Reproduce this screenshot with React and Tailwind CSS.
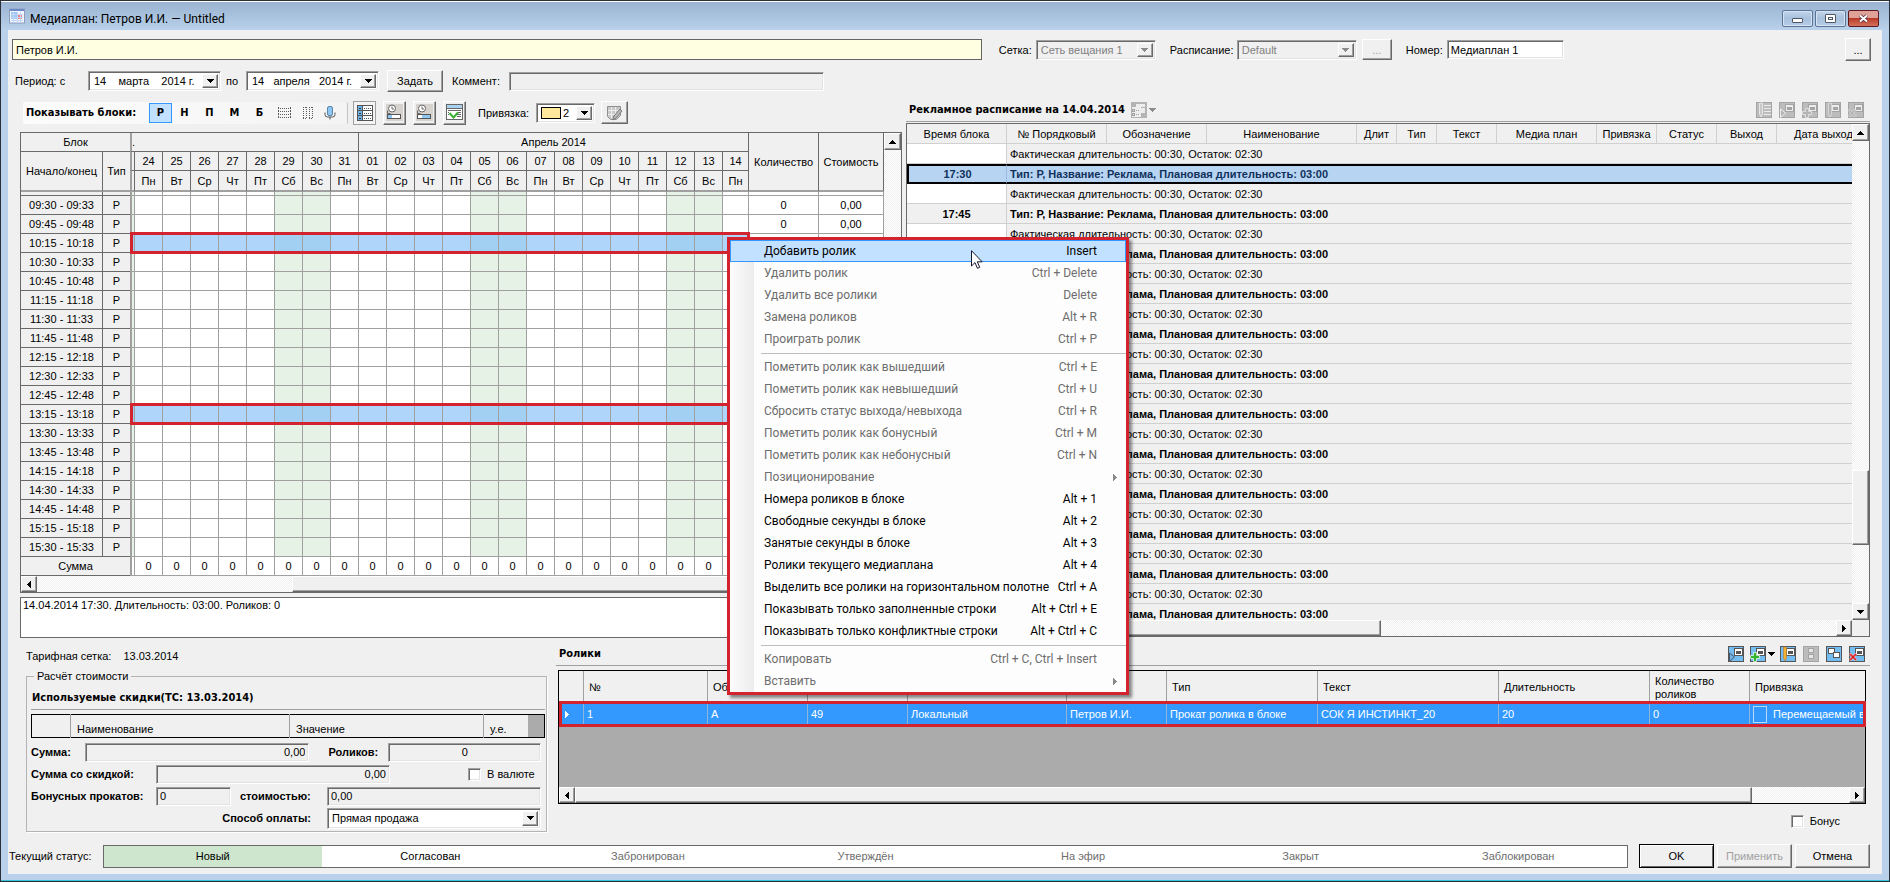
import clsx from 'clsx';

const DAYS = [
  ['24', 'Пн'], ['25', 'Вт'], ['26', 'Ср'], ['27', 'Чт'], ['28', 'Пт'], ['29', 'Сб'], ['30', 'Вс'], ['31', 'Пн'],
  ['01', 'Вт'], ['02', 'Ср'], ['03', 'Чт'], ['04', 'Пт'], ['05', 'Сб'], ['06', 'Вс'], ['07', 'Пн'], ['08', 'Вт'],
  ['09', 'Ср'], ['10', 'Чт'], ['11', 'Пт'], ['12', 'Сб'], ['13', 'Вс'], ['14', 'Пн'],
];

const BLOCKS = [
  '09:30 - 09:33', '09:45 - 09:48', '10:15 - 10:18', '10:30 - 10:33', '10:45 - 10:48', '11:15 - 11:18', '11:30 - 11:33',
  '11:45 - 11:48', '12:15 - 12:18', '12:30 - 12:33', '12:45 - 12:48', '13:15 - 13:18', '13:30 - 13:33', '13:45 - 13:48',
  '14:15 - 14:18', '14:30 - 14:33', '14:45 - 14:48', '15:15 - 15:18', '15:30 - 15:33',
];
const SELECTED_BLOCKS = ['10:15 - 10:18', '13:15 - 13:18'];

const SCHEDULE_TIMES = ['17:30', '17:45', '18:15', '18:30', '18:45', '19:15', '19:30', '19:45', '20:15', '20:30', '20:45', '21:15'];

const SCHEDULE_COLUMNS = [
  'Время блока', '№ Порядковый', 'Обозначение', 'Наименование', 'Длит', 'Тип', 'Текст', 'Медиа план', 'Привязка', 'Статус', 'Выход', 'Дата выхода',
];

const MENU = [
  { label: 'Добавить ролик', keys: 'Insert', active: true },
  { label: 'Удалить ролик', keys: 'Ctrl + Delete', disabled: true },
  { label: 'Удалить все ролики', keys: 'Delete', disabled: true },
  { label: 'Замена роликов', keys: 'Alt + R', disabled: true },
  { label: 'Проиграть ролик', keys: 'Ctrl + P', disabled: true },
  null,
  { label: 'Пометить ролик как вышедший', keys: 'Ctrl + E', disabled: true },
  { label: 'Пометить ролик как невышедший', keys: 'Ctrl + U', disabled: true },
  { label: 'Сбросить статус выхода/невыхода', keys: 'Ctrl + R', disabled: true },
  { label: 'Пометить ролик как бонусный', keys: 'Ctrl + M', disabled: true },
  { label: 'Пометить ролик как небонусный', keys: 'Ctrl + N', disabled: true },
  { label: 'Позиционирование', submenu: true, disabled: true },
  { label: 'Номера роликов в блоке', keys: 'Alt + 1' },
  { label: 'Свободные секунды в блоке', keys: 'Alt + 2' },
  { label: 'Занятые секунды в блоке', keys: 'Alt + 3' },
  { label: 'Ролики текущего медиаплана', keys: 'Alt + 4' },
  { label: 'Выделить все ролики на горизонтальном полотне', keys: 'Ctrl + A' },
  { label: 'Показывать только заполненные строки', keys: 'Alt + Ctrl + E' },
  { label: 'Показывать только конфликтные строки', keys: 'Alt + Ctrl + C' },
  null,
  { label: 'Копировать', keys: 'Ctrl + C, Ctrl + Insert', disabled: true },
  { label: 'Вставить', submenu: true, disabled: true },
];

const STATUSES = ['Новый', 'Согласован', 'Забронирован', 'Утверждён', 'На эфир', 'Закрыт', 'Заблокирован'];

const RAISED =
  'bg-[#f0f0f0] border border-t-white border-l-white border-r-[#696969] border-b-[#696969] shadow-[inset_-1px_-1px_0_#a0a0a0]';
const SUNKEN =
  'border border-t-[#a0a0a0] border-l-[#a0a0a0] border-r-white border-b-white shadow-[inset_1px_1px_0_#696969,inset_-1px_-1px_0_#e3e3e3]';
const TRACK = 'bg-[repeating-conic-gradient(#ffffff_0_25%,#f0f0f0_0_50%)] bg-[length:2px_2px]';

const isWeekend = (day) => day === 'Сб' || day === 'Вс';

/* ---------- Иконки ---------- */

function Arrow({ dir = 'down', className }) {
  const points = {
    down: '0,0 7,0 3.5,4',
    up: '0,4 7,4 3.5,0',
    left: '4,0 4,7 0,3.5',
    right: '0,0 0,7 4,3.5',
  };
  const vertical = dir === 'down' || dir === 'up';
  return (
    <svg width={vertical ? 7 : 4} height={vertical ? 4 : 7} className={className} shapeRendering="crispEdges" aria-hidden="true">
      <polygon points={points[dir]} fill="currentColor" />
    </svg>
  );
}

function AppIcon() {
  return (
    <svg width="16" height="16" viewBox="0 0 16 16" aria-hidden="true">
      <rect x="0.5" y="1" width="15" height="14" fill="#f1f5fd" stroke="#8d9bc0" />
      <rect x="1" y="1" width="14" height="2" fill="#6d8ac6" />
      <rect x="2" y="4" width="6" height="7" fill="#9cc6f8" />
      <rect x="9" y="7" width="4" height="4" fill="#f28080" />
      <path d="M2 6.500h12M2 9.500h12M2 12.500h12M4.500 4v10M8.500 4v10M11.500 4v10" stroke="#c3d6f4" fill="none" />
    </svg>
  );
}

function RowsIcon() {
  return (
    <svg width="13" height="12" viewBox="0 0 13 12" shapeRendering="crispEdges" aria-hidden="true">
      <path d="M0 1.500h13M0 4.500h13M0 7.500h13M0 10.500h13" stroke="#5a5a5a" strokeDasharray="1 1" fill="none" />
      <path d="M0.500 0v12M12.500 0v12" stroke="#5a5a5a" strokeDasharray="1 2" fill="none" />
    </svg>
  );
}

function ColumnsIcon() {
  return (
    <svg width="11" height="12" viewBox="0 0 11 12" shapeRendering="crispEdges" aria-hidden="true">
      <path d="M1.500 0v12M4.500 0v12M7.500 0v12M10.500 0v12M1 0.500h4M7 0.500h4M1 11.500h4M7 11.500h4" stroke="#5a5a5a" strokeDasharray="1 1" fill="none" />
    </svg>
  );
}

function MicIcon() {
  return (
    <svg width="12" height="14" viewBox="0 0 12 14" aria-hidden="true">
      <rect x="3.500" y="0.500" width="5" height="9" rx="1.500" fill="#8fc6f2" stroke="#5b87a8" />
      <path d="M1 6.500v2q0 2.500 2.500 2.500h5q2.500 0 2.500-2.500v-2M6 11v2.500" stroke="#555" fill="none" />
    </svg>
  );
}

function ListIcon() {
  return (
    <svg width="16" height="16" viewBox="0 0 16 16" shapeRendering="crispEdges" aria-hidden="true">
      <rect x="0.500" y="0.500" width="15" height="15" fill="#fff" stroke="#555" />
      <rect x="1" y="1" width="4" height="14" fill="#6db3e8" />
      <path d="M5.500 0v16M0 5.500h16M0 10.500h16" stroke="#555" />
      <path d="M7 3h7M7 8h7M7 13h7" stroke="#555" strokeDasharray="1 1" />
      <path d="M2 3h2M2 8h2M2 13h2" stroke="#333" />
    </svg>
  );
}

function ClockIcon({ filled }) {
  return (
    <svg width="17" height="17" viewBox="0 0 17 17" aria-hidden="true">
      <rect width="17" height="17" fill="#d6d3ce" />
      <circle cx="6" cy="4.500" r="3.500" fill="#fff" stroke="#666" />
      <path d="M6 2.500v2.500h2M1.500 6.500v3h3" stroke="#666" fill="none" />
      <rect x="1.500" y="10.500" width="13" height="4" fill={filled ? '#8fc6f2' : '#fff'} stroke="#555" shapeRendering="crispEdges" />
      <rect x="2" y="11" width="4" height="3" fill={filled ? '#fff' : '#8fc6f2'} />
    </svg>
  );
}

function CheckListIcon() {
  return (
    <svg width="17" height="17" viewBox="0 0 17 17" aria-hidden="true">
      <rect x="0.500" y="0.500" width="16" height="15" fill="#fff" stroke="#666" shapeRendering="crispEdges" />
      <rect x="1" y="1" width="15" height="3" fill="#a9d2f0" />
      <path d="M1 4.500h15M2 6.500h13M2 8.500h1M12 8.500h3M2 10.500h1M11 10.500h4M11 12.500h4" stroke="#666" shapeRendering="crispEdges" />
      <path d="M3.500 9l4 4.500 4.500-5" stroke="#39b032" strokeWidth="2" fill="none" />
    </svg>
  );
}

function EditGridIcon() {
  return (
    <svg width="17" height="16" viewBox="0 0 17 16" aria-hidden="true">
      <path d="M1.500 1.500h13v9l-4 4h-6l-3-3z" fill="#c9c9c9" stroke="#8f8f8f" />
      <path d="M2 5.500h12M2 9.500h11M5.500 2v11M9.500 2v10" stroke="#ececec" />
      <path d="M7 15l1-4 6-7 2 2-6 7z" fill="#b8b8b8" stroke="#7a7a7a" />
    </svg>
  );
}

function ScheduleIcon() {
  return (
    <svg width="16" height="16" viewBox="0 0 16 16" shapeRendering="crispEdges" aria-hidden="true">
      <rect width="16" height="16" fill="#b4b4b4" />
      <rect x="5" y="2" width="9" height="9" fill="#ededed" />
      <rect x="1" y="5" width="9" height="10" fill="#ededed" />
      <rect x="10" y="5" width="4" height="1" fill="#b4b4b4" />
      <path d="M1.500 7.500h2v2h-2zM1.500 11.500h2v2h-2z" stroke="#a0a0a0" fill="none" />
      <path d="M5 8.500h4M5 12.500h4" stroke="#a0a0a0" strokeDasharray="1 1" />
    </svg>
  );
}

const CARD_OVERLAYS = {
  play: { color: '#6db3e8', path: <path d="M1.500 7v8.500L6.500 11z" stroke="#4a5a66" /> },
  add: { color: '#35b52c', path: <path d="M3.500 6.500h3v3h3v3h-3v3h-3v-3h-3v-3h3z" stroke="#ffffff" strokeWidth="0.700" /> },
  edit: { color: '#f2b233', path: <path d="M3.500 1h3v11L5 15l-1.500-3z" stroke="#b8792a" strokeWidth="0.600" /> },
  remove: { color: '#e02020', path: <path d="M0 8.500L1.500 7 4 9.500 6.500 7 8 8.500 5.500 11 8 13.500 6.500 15 4 12.500 1.500 15 0 13.500 2.500 11z" stroke="#fff" strokeWidth="0.500" /> },
};

function CardIcon({ kind, muted }) {
  const base = muted ? '#bcbcbc' : '#74bdf2';
  const line = muted ? '#a4a4a4' : '#555555';
  const overlay = CARD_OVERLAYS[kind];
  return (
    <svg width="16" height="16" viewBox="0 0 16 16" aria-hidden="true">
      <g shapeRendering="crispEdges">
        <rect x="0.500" y="0.500" width="15" height="15" fill={base} stroke={line} />
        {kind === 'copy' && (
          <>
            <rect x="2.500" y="2.500" width="6" height="5" fill="#fff" stroke={line} />
            <rect x="7.500" y="6.500" width="6" height="5" fill="#fff" stroke={line} />
          </>
        )}
        {kind === 'stack' && (
          <>
            <rect x="5.500" y="2.500" width="5" height="4" fill="#e6e6e6" stroke={line} />
            <rect x="5.500" y="8.500" width="5" height="4" fill="#e6e6e6" stroke={line} />
          </>
        )}
        {kind === 'list' && <path d="M8 3.500h7M8 6.500h7M8 9.500h7M8 12.500h7" stroke="#ececec" />}
        {overlay && (
          <>
            <rect x="6.500" y="2.500" width="8" height="7" fill={muted ? '#ececec' : '#ffffff'} stroke={line} />
            <rect x="8" y="5" width="5" height="3" fill={line} />
          </>
        )}
      </g>
      {kind === 'list' && <path d="M3.500 1h3v11L5 15l-1.500-3z" fill="#c8c8c8" stroke="#f4f4f4" strokeWidth="0.700" />}
      {overlay && <g fill={muted ? '#b4b4b4' : overlay.color} className={muted ? '[&_path]:stroke-[#eeeeee]' : ''}>{overlay.path}</g>}
    </svg>
  );
}

function Cursor() {
  return (
    <svg width="12" height="20" viewBox="0 0 12 20" className="absolute left-[241px] top-[10px]" aria-hidden="true">
      <path d="M0.500 0.700v15.300l3.500-3.400 2.400 5.700 2.300-1-2.400-5.500h4.900z" fill="#fff" stroke="#16162e" />
    </svg>
  );
}

/* ---------- Элементы управления ---------- */

function Button({ className, children, ...rest }) {
  return (
    <button type="button" className={clsx('flex shrink-0 items-center justify-center disabled:text-[#a0a0a0]', RAISED, className)} {...rest}>
      {children}
    </button>
  );
}

function Select({ id, value, disabled, className, swatch }) {
  return (
    <div className={clsx('flex shrink-0 items-center p-[2px]', SUNKEN, disabled ? 'bg-[#f0f0f0] text-[#808080]' : 'bg-white', className)}>
      {swatch && <span className="ml-[2px] h-[12px] w-[20px] border border-black bg-[#ffe79c]" />}
      <select id={id} disabled={disabled} className="min-w-0 flex-1 appearance-none bg-transparent pl-[2px] outline-none">
        <option>{value}</option>
      </select>
      <span className={clsx('flex w-[16px] shrink-0 items-center justify-center self-stretch', RAISED)}>
        <Arrow className={disabled ? 'text-[#8a8a8a]' : 'text-black'} />
      </span>
    </div>
  );
}

function DateField({ label, value }) {
  return (
    <div className={clsx('flex h-[20px] w-[133px] shrink-0 bg-white p-[2px]', SUNKEN)}>
      <input aria-label={label} defaultValue={value} className="min-w-0 flex-1 bg-transparent pl-[3px] outline-none" />
      <Button className="w-[16px]" aria-label="Открыть календарь">
        <Arrow />
      </Button>
    </div>
  );
}

function Field({ className, ...rest }) {
  return <input className={clsx('h-[19px] min-w-0 bg-[#f0f0f0] px-[3px] outline-none', SUNKEN, className)} {...rest} />;
}

function Checkbox({ id, className }) {
  return <input id={id} type="checkbox" className={clsx('size-[13px] shrink-0 appearance-none bg-white', SUNKEN, className)} />;
}

function HScroll({ before, thumb, after, className }) {
  return (
    <div className={clsx('flex h-[16px]', className)}>
      <Button className="w-[16px]" aria-label="Влево"><Arrow dir="left" /></Button>
      <div className={TRACK} style={{ flex: before }} />
      <div className={RAISED} style={{ flex: thumb }} />
      <div className={TRACK} style={{ flex: after }} />
      <Button className="w-[16px]" aria-label="Вправо"><Arrow dir="right" /></Button>
    </div>
  );
}

function VScroll({ before, thumb, after }) {
  return (
    <div className="flex w-[17px] shrink-0 flex-col">
      <Button className="h-[17px]" aria-label="Вверх"><Arrow dir="up" /></Button>
      <div className={TRACK} style={{ flex: before }} />
      <div className={RAISED} style={{ flex: thumb }} />
      <div className={TRACK} style={{ flex: after }} />
      <Button className="h-[17px]" aria-label="Вниз"><Arrow /></Button>
    </div>
  );
}

/* ---------- Окно ---------- */

function TitleBar() {
  const glass = 'flex h-[17px] w-[31px] items-center justify-center rounded-[2px] border';
  const blue = 'border-[#5c7596] bg-linear-to-b from-[#c3d6ea] via-[#a8c0dc] to-[#b6cde6] shadow-[inset_0_0_0_1px_#d5e3f3]';
  return (
    <header className="flex h-[28px] items-center bg-linear-to-b from-[#99b3d1] to-[#b9d1ea] px-[8px] font-[Roboto,'Noto_Sans',sans-serif] text-[12px]">
      <AppIcon />
      <h1 className="ml-[5px] flex-1 pt-[5px]">Медиаплан: Петров И.И. — Untitled</h1>
      <div className="flex gap-[2px] pr-[2px] pt-[5px]">
        <button type="button" aria-label="Свернуть" className={clsx(glass, blue)}>
          <span className="mt-[3px] h-[5px] w-[11px] rounded-[1px] border border-[#4c5665] bg-white" />
        </button>
        <button type="button" aria-label="Развернуть" className={clsx(glass, blue)}>
          <span className="flex h-[9px] w-[11px] items-center justify-center rounded-[1px] border border-[#4c5665] bg-white">
            <span className="h-[3px] w-[5px] border border-[#4c5665]" />
          </span>
        </button>
        <button type="button" aria-label="Закрыть" className={clsx(glass, 'border-[#5a1a20] bg-linear-to-b from-[#e0a197] from-45% via-[#b83a26] via-50% to-[#d4715c]')}>
          <svg width="11" height="9" viewBox="0 0 11 9" aria-hidden="true">
            <path d="M2 1.500l7 6M9 1.500l-7 6" stroke="#4a3040" strokeWidth="3.500" />
            <path d="M2 1.500l7 6M9 1.500l-7 6" stroke="#fff" strokeWidth="2" />
          </svg>
        </button>
      </div>
    </header>
  );
}

function PlanHeader() {
  return (
    <>
      <div className="flex h-[39px] items-center pr-[11px] pl-[4px]">
        <input aria-label="Рекламодатель" defaultValue="Петров И.И." className="h-[21px] min-w-0 flex-[968] border border-[#646464] bg-[#ffffe1] px-[3px] outline-none" />
        <label htmlFor="net" className="ml-[17px] w-[37px] shrink-0">Сетка:</label>
        <Select id="net" value="Сеть вещания 1" disabled className="h-[20px] w-[120px]" />
        <label htmlFor="timetable" className="ml-[14px] w-[67px] shrink-0">Расписание:</label>
        <Select id="timetable" value="Default" disabled className="h-[20px] w-[120px]" />
        <Button disabled className="ml-[5px] h-[21px] w-[30px]">...</Button>
        <label htmlFor="number" className="ml-[14px] w-[41px] shrink-0">Номер:</label>
        <Field id="number" defaultValue="Медиаплан 1" className="w-[117px] bg-white" />
        <div className="flex-[283]" />
        <Button className="h-[23px] w-[26px]">...</Button>
      </div>
      <div className="flex h-[24px] items-center pl-[7px]">
        <span className="w-[73px] shrink-0">Период: с</span>
        <DateField label="Начало периода" value="14    марта    2014 г." />
        <span className="w-[25px] pl-[5px]">по</span>
        <DateField label="Конец периода" value="14   апреля   2014 г." />
        <Button className="ml-[8px] h-[22px] w-[56px]">Задать</Button>
        <label htmlFor="comment" className="ml-[9px] w-[57px] shrink-0">Коммент:</label>
        <Field id="comment" className="w-[315px]" />
      </div>
    </>
  );
}

function BlockToolbar() {
  return (
    <div className="flex h-[39px] items-center">
      <div className="ml-[3px] flex h-[22px] w-[325px] items-center rounded-[2px] border-r border-[#c4c4c4] bg-linear-to-r from-[#fcfcfc] to-[#f4f4f4] pl-[3px] font-['DejaVu_Sans_Condensed','Noto_Sans',sans-serif] font-bold">
        <span className="w-[123px]">Показывать блоки:</span>
        <button type="button" className="h-[20px] w-[23px] border border-[#3399ff] bg-[#c2e0ff]">Р</button>
        {['Н', 'П', 'М', 'Б'].map((type) => (
          <button key={type} type="button" className="w-[25px]">{type}</button>
        ))}
        <div className="ml-[6px] flex items-center gap-[11px]">
          <button type="button" aria-label="Строки"><RowsIcon /></button>
          <button type="button" aria-label="Столбцы"><ColumnsIcon /></button>
          <button type="button" aria-label="Микрофон"><MicIcon /></button>
        </div>
      </div>
      <div className="ml-[5px] flex gap-[7px]">
        <button type="button" aria-label="Список" className="flex h-[24px] w-[23px] items-center justify-center border border-[#a0a0a0] bg-[#f4f4f4]"><ListIcon /></button>
        <Button className="h-[24px] w-[23px]" aria-label="Время"><ClockIcon /></Button>
        <Button className="h-[24px] w-[23px]" aria-label="Занятое время"><ClockIcon filled /></Button>
        <Button className="h-[24px] w-[23px]" aria-label="Проверка"><CheckListIcon /></Button>
      </div>
      <label htmlFor="bind" className="ml-[12px] w-[58px]">Привязка:</label>
      <Select id="bind" value="2" swatch className="h-[20px] w-[59px]" />
      <Button className="ml-[6px] h-[23px] w-[27px]" aria-label="Изменить"><EditGridIcon /></Button>
    </div>
  );
}

function BlockGrid() {
  const head = 'border-r border-b border-[#696969] bg-[#f0f0f0] font-normal p-0 text-center';
  const cell = 'border-r border-b border-[#a0a0a0] p-0 text-center';
  const frozen = 'border-l-2 border-l-[#a0a0a0]';
  return (
    <div className="overflow-hidden border border-[#696969] bg-white">
      <div className="flex">
        <div className="min-w-0 flex-1 overflow-hidden">
          <table className="w-[863px] table-fixed border-separate border-spacing-0 leading-[16px]">
            <colgroup>
              <col className="w-[82px]" />
              <col className="w-[27px]" />
              <col className="w-[5px]" />
              {DAYS.map(([num], i) => <col key={num} className={i === 21 ? 'w-[26px]' : 'w-[28px]'} />)}
              <col className="w-[70px]" />
              <col className="w-[65px]" />
            </colgroup>
            <thead>
              <tr className="h-[19px]">
                <th colSpan={2} className={clsx(head, 'border-r-0')}>Блок</th>
                <th colSpan={9} className={clsx(head, frozen, 'text-left')}>.</th>
                <th colSpan={14} className={head}>Апрель 2014</th>
                <th rowSpan={3} className={clsx(head, 'border-b-2 border-b-[#a0a0a0]')}>Количество</th>
                <th rowSpan={3} className={clsx(head, 'border-b-2 border-b-[#a0a0a0]')}>Стоимость</th>
              </tr>
              <tr className="h-[19px]">
                <th rowSpan={2} className={clsx(head, 'border-b-2 border-b-[#a0a0a0]')}>Начало/конец</th>
                <th rowSpan={2} className={clsx(head, 'border-r-0 border-b-2 border-b-[#a0a0a0]')}>Тип</th>
                <th className={clsx(head, frozen)} />
                {DAYS.map(([num]) => <th key={num} className={head}>{num}</th>)}
              </tr>
              <tr className="h-[21px]">
                <th className={clsx(head, frozen, 'border-b-2 border-b-[#a0a0a0]')} />
                {DAYS.map(([num, day]) => <th key={num} className={clsx(head, 'border-b-2 border-b-[#a0a0a0]')}>{day}</th>)}
              </tr>
            </thead>
            <tbody>
              <tr className="h-[4px]">
                <td className={clsx(head)} />
                <td className={clsx(head, 'border-r-0')} />
                <td className={clsx(cell, frozen, 'bg-[#e6f2e6]')} />
                {DAYS.map(([num, day]) => <td key={num} className={clsx(cell, isWeekend(day) && 'bg-[#e6f2e6]')} />)}
                <td className={cell} />
                <td className={cell} />
              </tr>
              {BLOCKS.map((block) => {
                const selected = SELECTED_BLOCKS.includes(block);
                return (
                  <tr key={block} className="h-[19px]">
                    <td className={head}>{block}</td>
                    <td className={clsx(head, 'border-r-0')}>Р</td>
                    <td className={clsx(cell, frozen, 'relative', selected ? 'bg-[#a2d0f2]' : 'bg-[#e6f2e6]')}>
                      {selected && <span className="absolute -top-[2px] -left-[2px] z-10 h-[22px] w-[620px] border-3 border-[#d2232f]" />}
                    </td>
                    {DAYS.map(([num, day]) => (
                      <td
                        key={num}
                        className={clsx(
                          cell,
                          selected && (isWeekend(day) ? 'bg-[#a2d0f2]' : 'bg-[#b0d5fb]'),
                          !selected && isWeekend(day) && 'bg-[#e6f2e6]',
                        )}
                      />
                    ))}
                    <td className={cell}>0</td>
                    <td className={cell}>0,00</td>
                  </tr>
                );
              })}
              <tr className="h-[19px]">
                <td colSpan={2} className={clsx(head, 'border-r-0')}>Сумма</td>
                <td className={clsx(cell, frozen)} />
                {DAYS.map(([num]) => <td key={num} className={cell}>0</td>)}
                <td className={cell}>0</td>
                <td className={cell}>0,00</td>
              </tr>
            </tbody>
          </table>
        </div>
        <VScroll before={200} thumb={120} after={80} />
      </div>
      <HScroll before={256} thumb={592} after={0} />
    </div>
  );
}

function Schedule() {
  const line = 'border-r border-b border-[#d0d0d0]';
  return (
    <section className="flex min-w-0 flex-col">
      <div className="mb-[1px] flex h-[29px] items-center border-b border-[#a0a0a0] pt-[5px] pl-[3px]">
        <h2 className="font-['DejaVu_Sans_Condensed','Noto_Sans',sans-serif] font-bold">Рекламное расписание на 14.04.2014</h2>
        <button type="button" aria-label="Вид" className="ml-[6px] flex items-center gap-[2px] text-[#8a8a8a]">
          <ScheduleIcon />
          <Arrow />
        </button>
        <div className="mr-[6px] ml-auto flex gap-[7px]">
          {['list', 'play', 'add', 'edit', 'remove'].map((kind) => (
            <button key={kind} type="button" disabled aria-label={kind}><CardIcon kind={kind} muted /></button>
          ))}
        </div>
      </div>
      <div className="border border-[#696969]">
        <div className="flex h-[496px]">
          <div className="min-w-0 flex-1 overflow-hidden">
            <table className="w-[970px] table-fixed border-separate border-spacing-0">
              <colgroup>
                <col className="w-[100px]" />
                <col className="w-[100px]" />
                <col className="w-[100px]" />
                <col className="w-[150px]" />
                <col className="w-[40px]" />
                <col className="w-[40px]" />
                <col className="w-[60px]" />
                <col className="w-[100px]" />
                <col className="w-[60px]" />
                <col className="w-[60px]" />
                <col className="w-[60px]" />
                <col className="w-[100px]" />
              </colgroup>
              <thead>
                <tr className="h-[20px]">
                  {SCHEDULE_COLUMNS.map((name) => <th key={name} className={clsx(line, 'p-0 font-normal whitespace-nowrap')}>{name}</th>)}
                </tr>
              </thead>
              <tbody>
                {SCHEDULE_TIMES.flatMap((time, i) => {
                  const edge = i === 0 ? 'border-y-2 border-black bg-[#b7d4f2] text-[#10305c]' : line;
                  return [
                    <tr key={`${time}-fact`} className="h-[20px]">
                      <td className={clsx(line, 'bg-white p-0')} />
                      <td colSpan={11} className={clsx(line, 'p-0 pl-[3px]')}>Фактическая длительность: 00:30, Остаток: 02:30</td>
                    </tr>,
                    <tr key={time} className="h-[20px] font-bold">
                      <td className={clsx(edge, 'p-0 text-center', i === 0 && 'border-r border-l-2 border-r-[#9cbbe0]')}>{time}</td>
                      <td colSpan={11} className={clsx(edge, 'p-0 pl-[3px]')}>Тип: Р, Название: Реклама, Плановая длительность: 03:00</td>
                    </tr>,
                  ];
                })}
              </tbody>
            </table>
          </div>
          <VScroll before={330} thumb={74} after={58} />
        </div>
        <div className="flex">
          <HScroll before={0} thumb={456} after={456} className="min-w-0 flex-1" />
          <div className="w-[17px] bg-[#f0f0f0]" />
        </div>
      </div>
    </section>
  );
}

function CostPanel() {
  return (
    <section className="min-w-0">
      <p className="h-[30px] pt-[10px] leading-[16px]">
        Тарифная сетка: <span className="ml-[9px]">13.03.2014</span>
      </p>
      <fieldset className="min-w-0 border border-[#b4b4b4] pr-[1px] pb-[2px] pl-[4px] shadow-[1px_1px_0_#fff]">
        <legend className="ml-[3px] px-[3px] leading-[16px]">Расчёт стоимости</legend>
        <h3 className="mb-[4px] flex h-[26px] items-center border-b border-[#a0a0a0] pt-[2px] pl-[1px] font-['DejaVu_Sans_Condensed','Noto_Sans',sans-serif] font-bold">
          Используемые скидки(ТС: 13.03.2014)
        </h3>
        <table className="w-full table-fixed border border-black bg-[#ababab] text-left">
          <thead>
            <tr className="h-[23px]">
              <td className="w-[39px] border-r border-[#a0a0a0] bg-[#f0f0f0]" />
              <th className="border-r border-[#a0a0a0] bg-[#f0f0f0] p-0 pt-[5px] pl-[6px] font-normal">Наименование</th>
              <th className="w-[194px] border-r border-[#a0a0a0] bg-[#f0f0f0] p-0 pt-[5px] pl-[6px] font-normal">Значение</th>
              <th className="w-[44px] bg-[#f0f0f0] p-0 pt-[5px] pl-[6px] font-normal">у.е.</th>
              <td className="w-[17px]" />
            </tr>
          </thead>
        </table>
        <div className="mt-[3px] flex h-[22px] items-center">
          <label htmlFor="sum" className="w-[54px] font-bold">Сумма:</label>
          <Field id="sum" defaultValue="0,00" className="flex-[217] text-right" />
          <label htmlFor="count" className="w-[79px] pl-[19px] font-bold">Роликов:</label>
          <Field id="count" defaultValue="0" className="mr-[4px] flex-[145] text-center" />
        </div>
        <div className="flex h-[22px] items-center">
          <label htmlFor="discounted" className="w-[125px] font-bold">Сумма со скидкой:</label>
          <Field id="discounted" defaultValue="0,00" className="flex-1 text-right" />
          <Checkbox id="currency" className="ml-[78px]" />
          <label htmlFor="currency" className="w-[64px] pl-[6px]">В валюте</label>
        </div>
        <div className="flex h-[22px] items-center">
          <label htmlFor="bonus-count" className="w-[125px] font-bold">Бонусных прокатов:</label>
          <Field id="bonus-count" defaultValue="0" className="flex-[67]" />
          <label htmlFor="bonus-cost" className="w-[96px] pl-[9px] font-bold">стоимостью:</label>
          <Field id="bonus-cost" defaultValue="0,00" className="mr-[4px] flex-[206]" />
        </div>
        <div className="flex h-[22px] items-center justify-end">
          <label htmlFor="payment" className="mr-[16px] font-bold">Способ оплаты:</label>
          <Select id="payment" value="Прямая продажа" className="mr-[4px] h-[21px] w-[214px]" />
        </div>
      </fieldset>
    </section>
  );
}

function ClipsPanel() {
  const th = 'border-r border-[#a0a0a0] p-0 pt-[2px] pl-[5px] font-normal leading-[13px]';
  const td = 'border-r border-[#8fb4dc] p-0 pl-[3px] whitespace-nowrap';
  return (
    <section className="min-w-0">
      <div className="mb-[4px] flex h-[28px] items-center border-b border-[#a0a0a0] pt-[4px] pl-[3px]">
        <h2 className="font-['DejaVu_Sans_Condensed','Noto_Sans',sans-serif] font-bold">Ролики</h2>
        <div className="mr-[5px] ml-auto flex items-center">
          <button type="button" aria-label="Проиграть"><CardIcon kind="play" /></button>
          <button type="button" aria-label="Добавить" className="mr-[5px] ml-[6px] flex items-center gap-[2px]"><CardIcon kind="add" /><Arrow /></button>
          <div className="flex gap-[7px]">
            <button type="button" aria-label="Изменить ролик"><CardIcon kind="edit" /></button>
            <button type="button" aria-label="Объединить" disabled><CardIcon kind="stack" muted /></button>
            <button type="button" aria-label="Копировать ролик"><CardIcon kind="copy" /></button>
            <button type="button" aria-label="Удалить"><CardIcon kind="remove" /></button>
          </div>
        </div>
      </div>
      <div className="mr-[4px] ml-[2px] border border-black bg-[#ababab]">
        <div className="relative h-[116px]">
          <div className="overflow-hidden">
            <table className="w-[1330px] table-fixed border-separate border-spacing-0 text-left">
              <colgroup>
                <col className="w-[25px]" />
                <col className="w-[124px]" />
                <col className="w-[100px]" />
                <col className="w-[100px]" />
                <col className="w-[159px]" />
                <col className="w-[100px]" />
                <col className="w-[151px]" />
                <col className="w-[181px]" />
                <col className="w-[151px]" />
                <col className="w-[100px]" />
                <col className="w-[139px]" />
              </colgroup>
              <thead>
                <tr className="h-[31px] bg-[#f0f0f0]">
                  <th className={th} />
                  <th className={th}>№</th>
                  <th className={th}>Обозначение</th>
                  <th className={th}>Номер</th>
                  <th className={th}>Вид</th>
                  <th className={th}>Клиент</th>
                  <th className={th}>Тип</th>
                  <th className={th}>Текст</th>
                  <th className={th}>Длительность</th>
                  <th className={th}>Количество роликов</th>
                  <th className={th}>Привязка</th>
                </tr>
              </thead>
              <tbody>
                <tr className="h-[24px] bg-[#3399ff] text-white">
                  <td className={td}><Arrow dir="right" className="ml-[3px]" /></td>
                  <td className={td}>1</td>
                  <td className={td}>A</td>
                  <td className={td}>49</td>
                  <td className={td}>Локальный</td>
                  <td className={td}>Петров И.И.</td>
                  <td className={td}>Прокат ролика в блоке</td>
                  <td className={td}>СОК Я ИНСТИНКТ_20</td>
                  <td className={td}>20</td>
                  <td className={td}>0</td>
                  <td className={td}>
                    <span className="flex items-center gap-[6px]">
                      <span className="h-[17px] w-[14px] shrink-0 border border-[#b8d8f8]" />
                      Перемещаемый в блоке
                    </span>
                  </td>
                </tr>
              </tbody>
            </table>
          </div>
          <span className="absolute top-[30px] -right-[1px] left-0 h-[26px] border-3 border-[#d2232f]" />
        </div>
        <HScroll before={0} thumb={1177} after={97} />
      </div>
      <div className="mt-[10px] flex items-center justify-end pr-[30px]">
        <Checkbox id="bonus" />
        <label htmlFor="bonus" className="pl-[6px]">Бонус</label>
      </div>
    </section>
  );
}

function StatusRow() {
  return (
    <footer className="mt-auto flex items-center pr-[12px] pb-[6px]">
      <span className="w-[95px] shrink-0 pl-[1px]">Текущий статус:</span>
      <div className="flex h-[23px] min-w-0 flex-1 items-center border border-[#696969] bg-white text-center">
        {STATUSES.map((status, i) => (
          <span key={status} className={clsx('flex-1 leading-[21px]', i === 0 && 'bg-[#cde6cd]', i > 1 && 'text-[#6d6d6d]')}>{status}</span>
        ))}
      </div>
      <div className="ml-[11px] flex gap-[3px]">
        <button type="button" className="h-[24px] w-[75px] border border-black bg-[#f0f0f0] shadow-[inset_1px_1px_0_#fff,inset_-1px_-1px_0_#696969]">OK</button>
        <Button disabled className="h-[24px] w-[75px]">Применить</Button>
        <Button className="h-[24px] w-[75px]">Отмена</Button>
      </div>
    </footer>
  );
}

function ContextMenu() {
  return (
    <div
      role="menu"
      className="absolute top-[207px] left-[719px] z-20 w-[402px] border-3 border-[#d2232f] bg-[#fdfdfd] bg-linear-to-r from-[#fcfcfc] to-[#ececec] bg-[length:24px_100%] bg-no-repeat font-[Roboto,'Noto_Sans',sans-serif] text-[12px] shadow-[3px_3px_3px_rgba(0,0,0,0.45)]"
    >
      {MENU.map((item, i) =>
        item ? (
          <button
            key={item.label}
            type="button"
            role="menuitem"
            disabled={item.disabled}
            className={clsx(
              'flex h-[22px] w-full items-center justify-between border pl-[33px]',
              item.submenu ? 'pr-[8px]' : 'pr-[28px]',
              item.disabled && 'text-[#6d6d6d]',
              item.active ? 'border-[#3399ff] bg-[#c2e0ff]' : 'border-transparent',
            )}
          >
            <span className="whitespace-nowrap">{item.label}</span>
            {item.submenu ? <Arrow dir="right" className="text-[#8a8a8a]" /> : <span className="whitespace-nowrap">{item.keys}</span>}
          </button>
        ) : (
          <hr key={i} className="mt-[3px] mb-[2px] ml-[31px] border-t border-[#bdbdbd]" />
        ),
      )}
      <Cursor />
    </div>
  );
}

export default function App() {
  return (
    <div className="flex min-h-screen flex-col border border-[#2b3038] bg-[#b9d1ea] font-['Liberation_Sans',Arial,sans-serif] text-[11px] leading-[14px] text-black">
      <div className="flex flex-1 flex-col border-t border-b border-t-white border-b-[#35c5d8]">
        <TitleBar />
        <main className="relative mx-[7px] mb-[6px] flex flex-1 flex-col bg-[#f0f0f0]">
          <PlanHeader />
          <div className="grid grid-cols-[882fr_964fr] gap-[4px] px-[12px]">
            <section className="min-w-0">
              <BlockToolbar />
              <BlockGrid />
              <textarea readOnly aria-label="Описание блока" value="14.04.2014 17:30. Длительность: 03:00. Роликов: 0" className="mt-[4px] block h-[41px] w-full resize-none border border-[#696969] bg-white px-[2px] outline-none" />
            </section>
            <Schedule />
          </div>
          <div className="grid grid-cols-[521fr_1314fr] gap-[9px] pr-[12px] pl-[18px]">
            <CostPanel />
            <ClipsPanel />
          </div>
          <StatusRow />
          <ContextMenu />
        </main>
      </div>
    </div>
  );
}
